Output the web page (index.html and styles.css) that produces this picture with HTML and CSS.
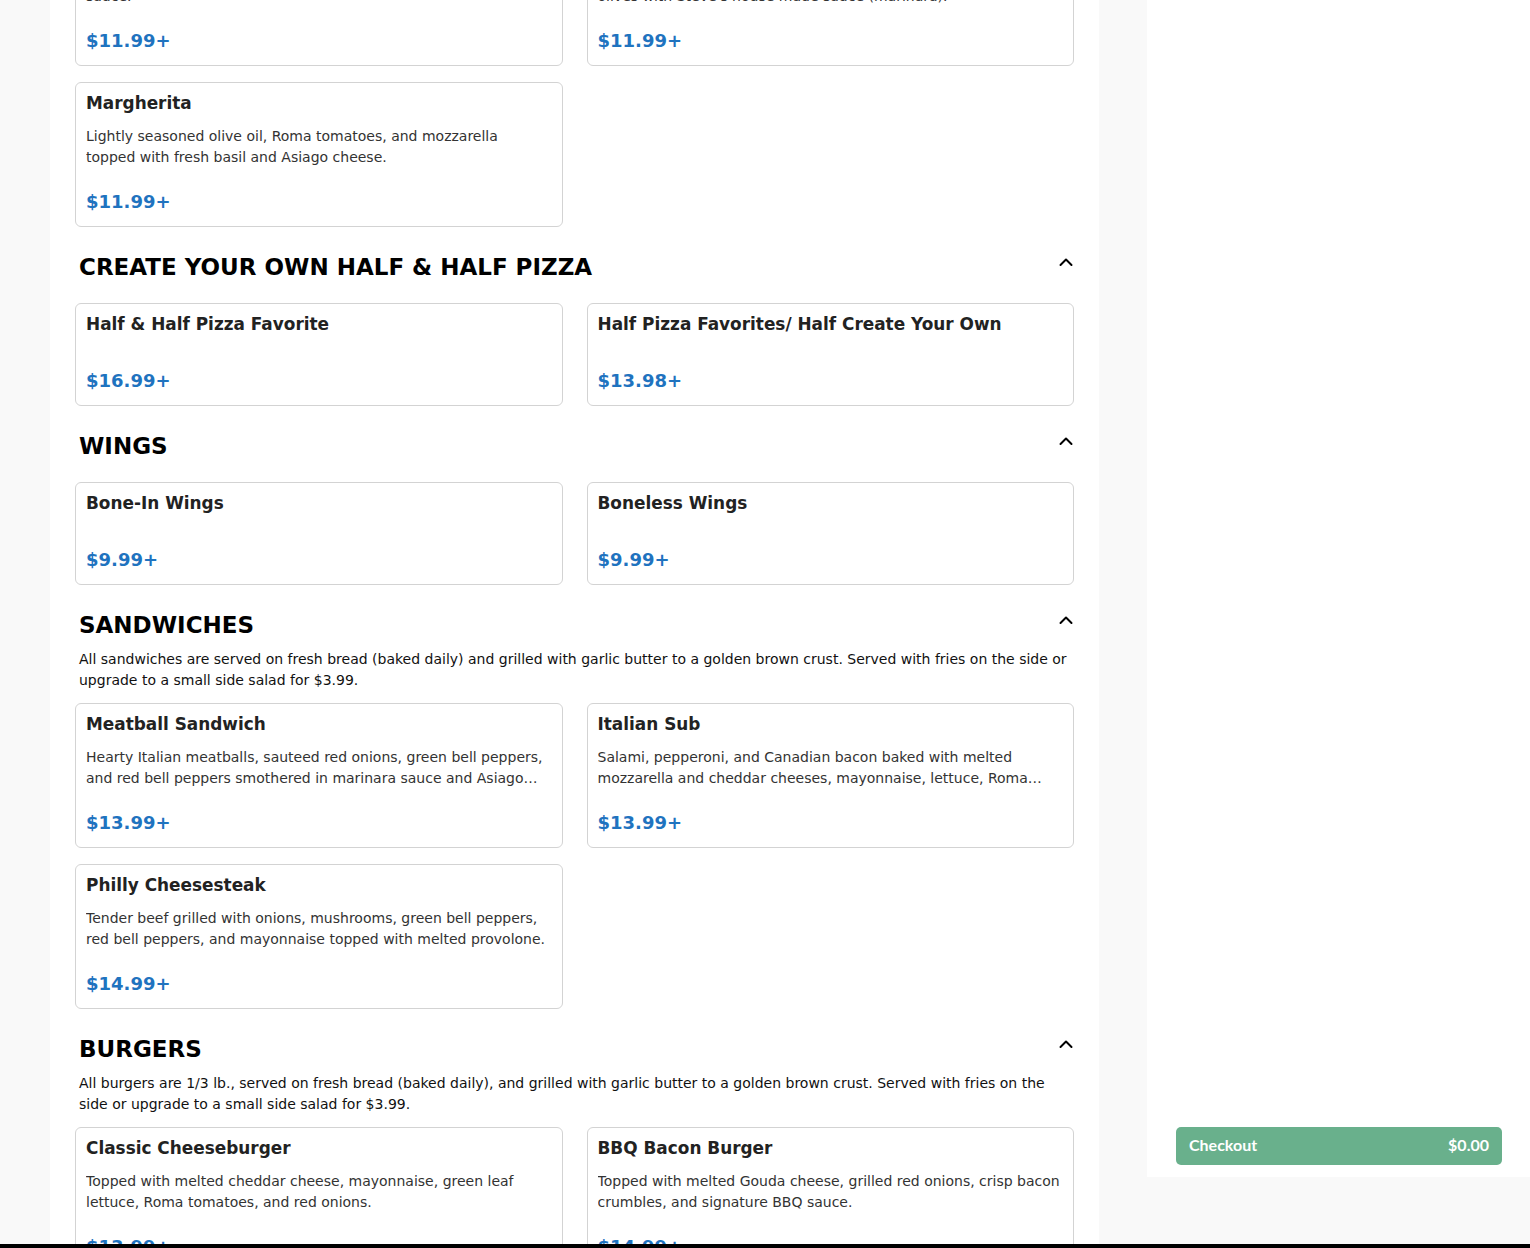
FILE: index.html
```html
<!DOCTYPE html>
<html lang="en">
<head>
  <meta charset="UTF-8">
  <title>Menu</title>
  <link rel="stylesheet" href="styles.css">
</head>
<body>
  <div class="page">
    <main class="menu">
      <div class="item-grid first">
        <div class="item-card">
          <h3 class="item-name">Hawaiian</h3>
          <p class="item-desc">Ham, pineapple, bacon, and mozzarella with Steve's special sauce.</p>
          <p class="item-price">$11.99+</p>
        </div>
        <div class="item-card">
          <h3 class="item-name">Supreme</h3>
          <p class="item-desc">Pepperoni, sausage, mushrooms, green peppers, onions, black olives with Steve's house made sauce (marinara).</p>
          <p class="item-price">$11.99+</p>
        </div>
        <div class="item-card">
          <h3 class="item-name">Margherita</h3>
          <p class="item-desc">Lightly seasoned olive oil, Roma tomatoes, and mozzarella topped with fresh basil and Asiago cheese.</p>
          <p class="item-price">$11.99+</p>
        </div>
      </div>

      <section class="category">
        <div class="category-head">
          <h2>CREATE YOUR OWN HALF &amp; HALF PIZZA</h2>
          <button class="toggle"><svg width="14" height="10" viewBox="0 0 14 10"><path d="M1.5 8 L7 2.5 L12.5 8" fill="none" stroke="#000" stroke-width="2" stroke-linecap="round" stroke-linejoin="round"/></svg></button>
        </div>
        <div class="item-grid">
          <div class="item-card">
            <h3 class="item-name">Half &amp; Half Pizza Favorite</h3>
            <p class="item-price">$16.99+</p>
          </div>
          <div class="item-card">
            <h3 class="item-name">Half Pizza Favorites/ Half Create Your Own</h3>
            <p class="item-price">$13.98+</p>
          </div>
        </div>
      </section>

      <section class="category">
        <div class="category-head">
          <h2>WINGS</h2>
          <button class="toggle"><svg width="14" height="10" viewBox="0 0 14 10"><path d="M1.5 8 L7 2.5 L12.5 8" fill="none" stroke="#000" stroke-width="2" stroke-linecap="round" stroke-linejoin="round"/></svg></button>
        </div>
        <div class="item-grid">
          <div class="item-card">
            <h3 class="item-name">Bone-In Wings</h3>
            <p class="item-price">$9.99+</p>
          </div>
          <div class="item-card">
            <h3 class="item-name">Boneless Wings</h3>
            <p class="item-price">$9.99+</p>
          </div>
        </div>
      </section>

      <section class="category">
        <div class="category-head">
          <h2>SANDWICHES</h2>
          <button class="toggle"><svg width="14" height="10" viewBox="0 0 14 10"><path d="M1.5 8 L7 2.5 L12.5 8" fill="none" stroke="#000" stroke-width="2" stroke-linecap="round" stroke-linejoin="round"/></svg></button>
        </div>
        <p class="category-desc">All sandwiches are served on fresh bread (baked daily) and grilled with garlic butter to a golden brown crust. Served with fries on the side or upgrade to a small side salad for $3.99.</p>
        <div class="item-grid">
          <div class="item-card">
            <h3 class="item-name">Meatball Sandwich</h3>
            <p class="item-desc">Hearty Italian meatballs, sauteed red onions, green bell peppers, and red bell peppers smothered in marinara sauce and Asiago cheese.</p>
            <p class="item-price">$13.99+</p>
          </div>
          <div class="item-card">
            <h3 class="item-name">Italian Sub</h3>
            <p class="item-desc">Salami, pepperoni, and Canadian bacon baked with melted mozzarella and cheddar cheeses, mayonnaise, lettuce, Roma tomatoes, and red onions.</p>
            <p class="item-price">$13.99+</p>
          </div>
          <div class="item-card">
            <h3 class="item-name">Philly Cheesesteak</h3>
            <p class="item-desc">Tender beef grilled with onions, mushrooms, green bell peppers, red bell peppers, and mayonnaise topped with melted provolone.</p>
            <p class="item-price">$14.99+</p>
          </div>
        </div>
      </section>

      <section class="category">
        <div class="category-head">
          <h2>BURGERS</h2>
          <button class="toggle"><svg width="14" height="10" viewBox="0 0 14 10"><path d="M1.5 8 L7 2.5 L12.5 8" fill="none" stroke="#000" stroke-width="2" stroke-linecap="round" stroke-linejoin="round"/></svg></button>
        </div>
        <p class="category-desc">All burgers are 1/3 lb., served on fresh bread (baked daily), and grilled with garlic butter to a golden brown crust. Served with fries on the side or upgrade to a small side salad for $3.99.</p>
        <div class="item-grid">
          <div class="item-card">
            <h3 class="item-name">Classic Cheeseburger</h3>
            <p class="item-desc">Topped with melted cheddar cheese, mayonnaise, green leaf lettuce, Roma tomatoes, and red onions.</p>
            <p class="item-price">$13.99+</p>
          </div>
          <div class="item-card">
            <h3 class="item-name">BBQ Bacon Burger</h3>
            <p class="item-desc">Topped with melted Gouda cheese, grilled red onions, crisp bacon crumbles, and signature BBQ sauce.</p>
            <p class="item-price">$14.99+</p>
          </div>
        </div>
      </section>
    </main>

    <aside class="cart">
      <button class="checkout"><span>Checkout</span><span>$0.00</span></button>
    </aside>
  </div>
</body>
</html>
```

FILE: styles.css
```css
body {
  margin: 0;
  background: #000;
  font-family: "DejaVu Sans", sans-serif;
}
.page {
  display: flex;
  gap: 48px;
  height: 1244px;
  padding-left: 50px;
  box-sizing: border-box;
  overflow: hidden;
  background: #f9f9f9;
}
.menu {
  display: flex;
  flex-direction: column;
  width: 1049px;
  flex-shrink: 0;
  padding: 0 25px;
  box-sizing: border-box;
  background: #fff;
}
.item-grid {
  display: grid;
  grid-template-columns: 1fr 1fr;
  gap: 16px 24px;
  margin-top: 12px;
}
.item-grid.first {
  margin-top: -79px;
}
.item-card {
  display: flex;
  flex-direction: column;
  border: 1px solid #d3d3d3;
  border-radius: 6px;
  padding: 10px 10px 14px;
}
.item-name {
  margin: 0 0 13px;
  font-size: 16.9px;
  line-height: 20px;
  font-weight: bold;
  color: #222;
}
.item-desc {
  margin: 0;
  font-size: 14px;
  line-height: 21px;
  color: #333;
  display: -webkit-box;
  -webkit-line-clamp: 2;
  -webkit-box-orient: vertical;
  overflow: hidden;
}
.item-price {
  margin: 23px 0 0;
  font-size: 18px;
  line-height: 21px;
  font-weight: bold;
  color: #1f73bf;
}
.category {
  display: flex;
  flex-direction: column;
  margin-top: 27px;
}
.category-head {
  display: flex;
  justify-content: space-between;
  align-items: flex-start;
  padding: 0 1px 0 4px;
  margin-bottom: 10px;
}
.category-head h2 {
  margin: 0;
  font-size: 23px;
  line-height: 27px;
  color: #000;
}
.toggle {
  display: flex;
  margin-top: 3px;
  padding: 0;
  border: none;
  background: none;
  cursor: pointer;
}
.category-desc {
  margin: 0;
  padding: 0 4px;
  font-size: 14px;
  line-height: 21px;
  color: #111;
}
.cart {
  display: flex;
  flex-direction: column;
  justify-content: flex-end;
  width: 383px;
  height: 1177px;
  flex-shrink: 0;
  padding: 0 28px 12px 29px;
  box-sizing: border-box;
  background: #fff;
}
.checkout {
  display: flex;
  justify-content: space-between;
  align-items: center;
  height: 38px;
  padding: 0 13px 3px;
  border: none;
  border-radius: 5px;
  background: #69b08c;
  color: #fff;
  font-family: Lato, "Open Sans", sans-serif;
  font-size: 16px;
  font-weight: bold;
  cursor: pointer;
}
```
